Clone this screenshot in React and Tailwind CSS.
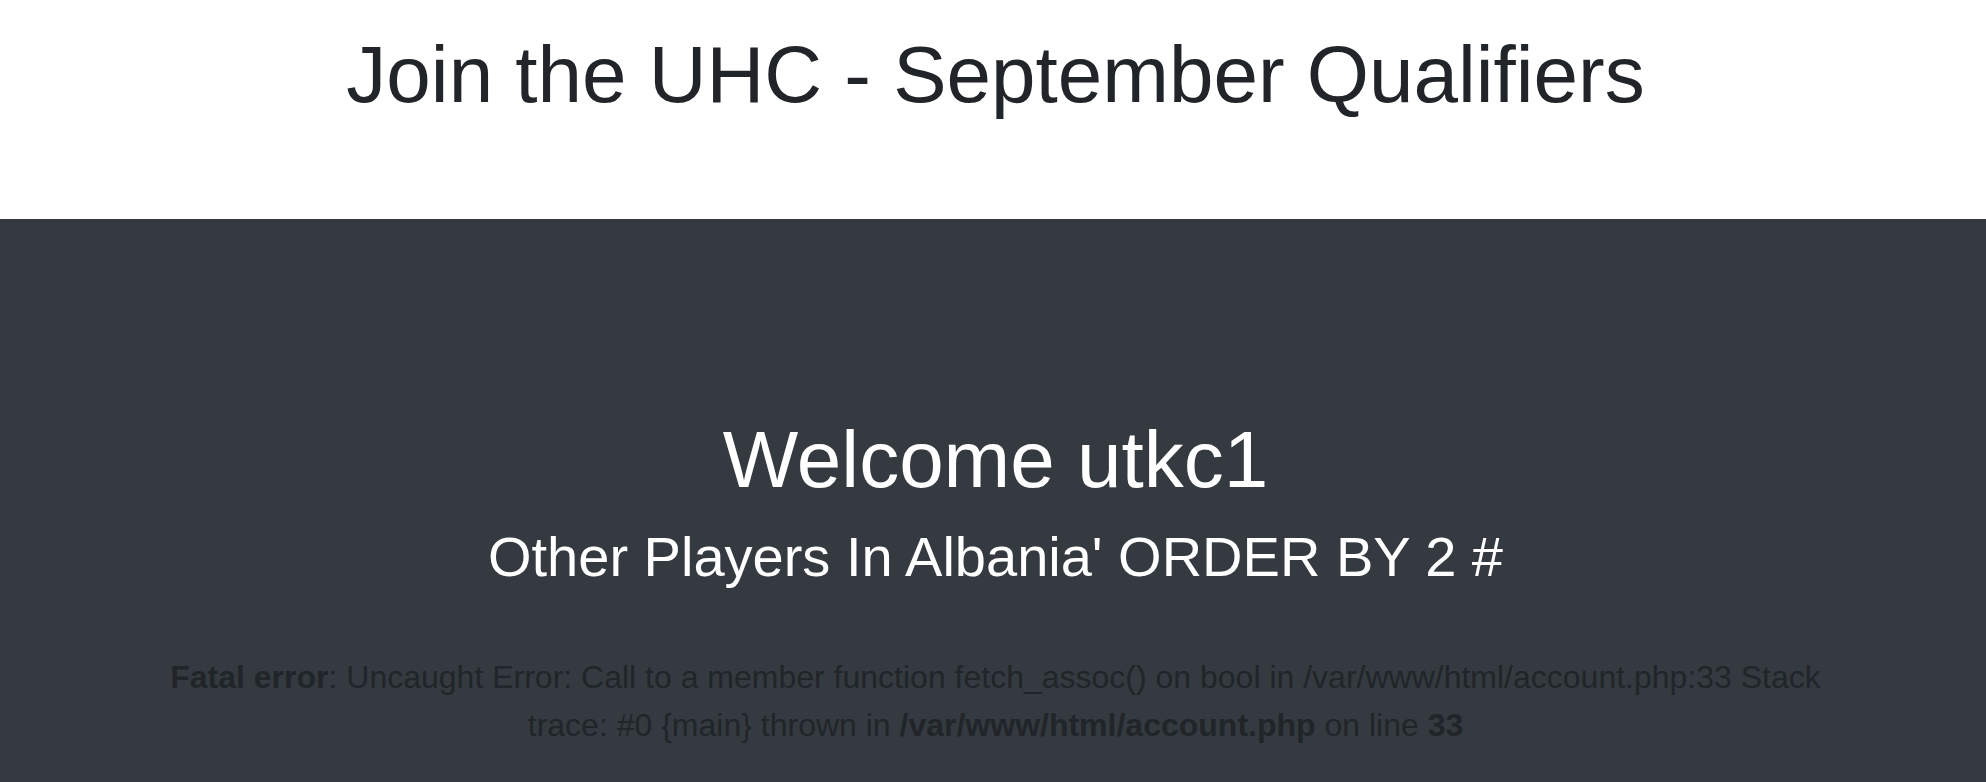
import React from 'react';

const App = () => {
  return (
    <div className="min-h-screen flex flex-col bg-white pl-[5px] font-['Liberation_Sans',Arial,sans-serif] text-[#212529]">
      <header className="h-[219px] pt-[27px] text-center">
        <h1 className="text-[80px] leading-[96px] font-normal">Join the UHC - September Qualifiers</h1>
      </header>

      <main className="flex-1 -ml-[5px] pl-[5px] bg-[#343a40] text-center pt-[193px] pb-[34px]">
        <h1 className="text-[80px] leading-[96px] font-normal text-white mb-[15px]">Welcome utkc1</h1>
        <h3 className="text-[56px] leading-[67px] font-normal text-white">Other Players In Albania' ORDER BY 2 #</h3>

        <p className="mx-auto w-[1720px] mt-[63px] text-[32px] leading-[48px] text-[#212529]">
          <b>Fatal error</b>: Uncaught Error: Call to a member function fetch_assoc() on bool in /var/www/html/account.php:33
          Stack trace: #0 {'{main}'} thrown in <b>/var/www/html/account.php</b> on line <b>33</b>
        </p>
      </main>
    </div>
  );
};

export default App;
